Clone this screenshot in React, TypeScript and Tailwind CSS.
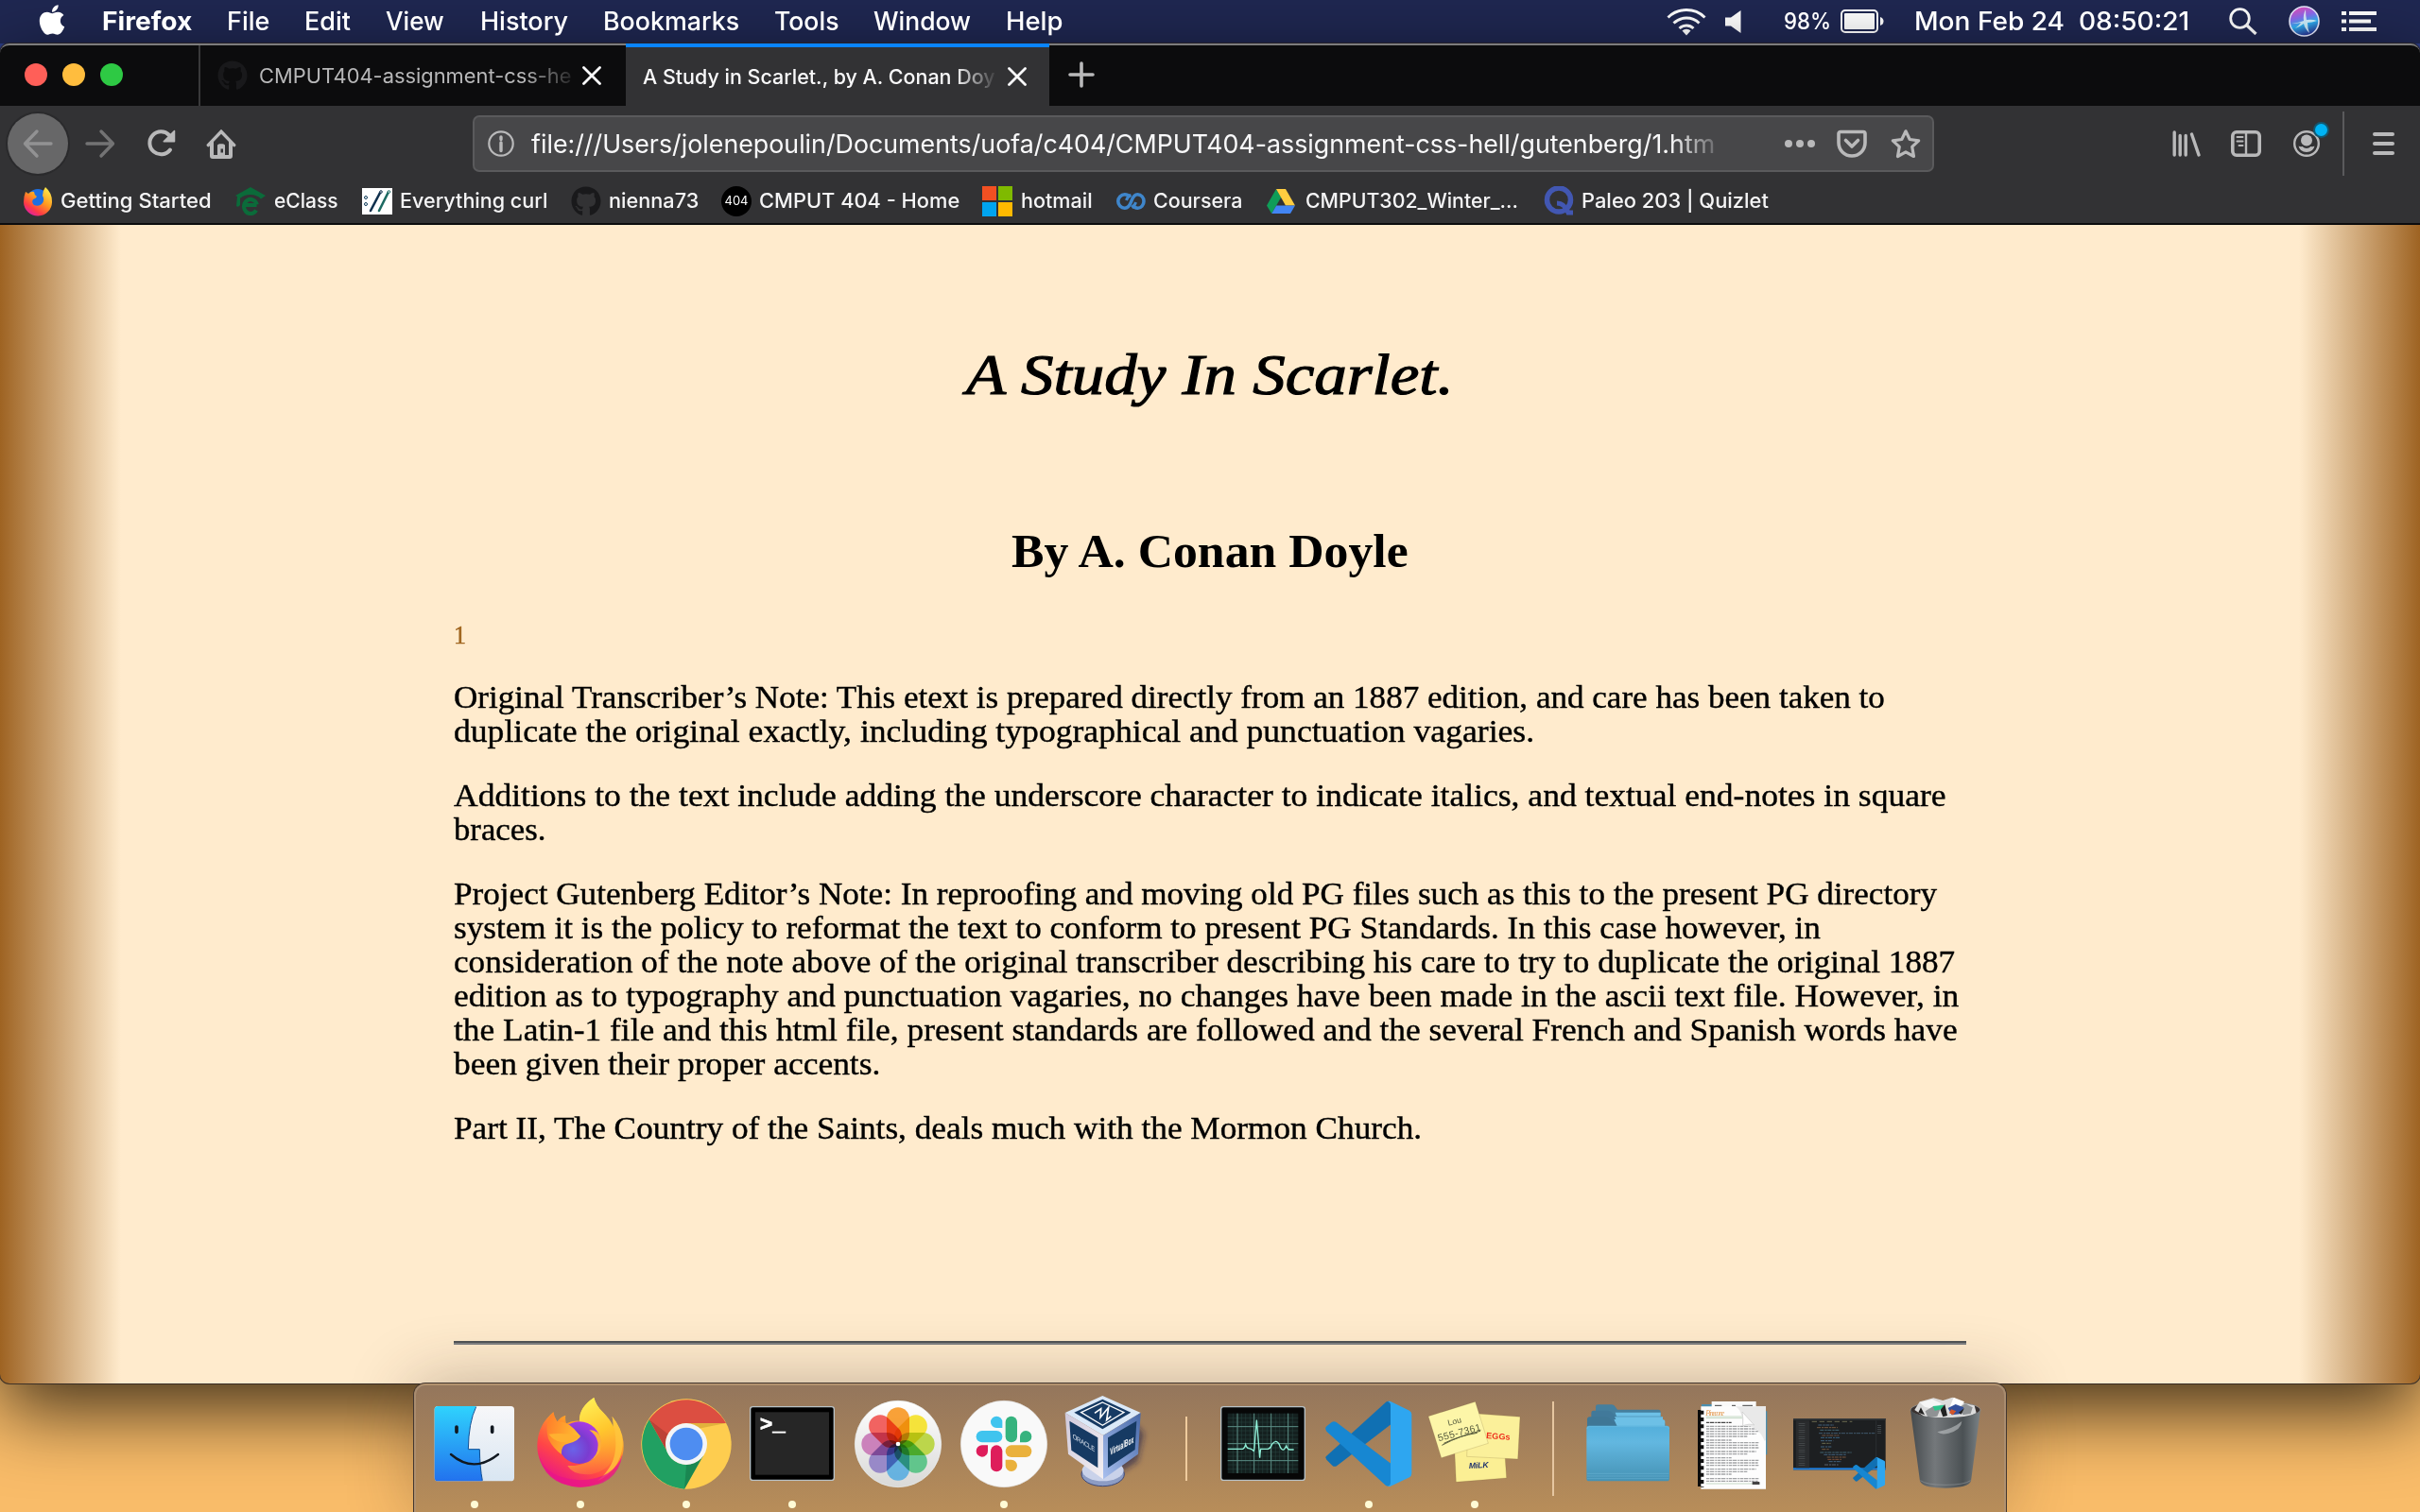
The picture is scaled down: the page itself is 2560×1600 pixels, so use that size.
import { useLayoutEffect, useRef, useState, type ReactNode } from "react";
import { FaApple, FaGithub } from "react-icons/fa";

/** Single line of text stretched horizontally so that it spans exactly `w` pixels. */
function Fit({ w, className = "", children }: { w: number; className?: string; children: ReactNode }) {
  const ref = useRef<HTMLSpanElement>(null);
  const [scale, setScale] = useState(1);
  useLayoutEffect(() => {
    if (ref.current) setScale(w / ref.current.offsetWidth);
  }, [w]);
  return (
    <span className={`block shrink-0 whitespace-pre ${className}`} style={{ width: w }}>
      <span ref={ref} className="inline-block origin-left" style={{ transform: `scaleX(${scale})` }}>
        {children}
      </span>
    </span>
  );
}

function MenuBar() {
  return (
    <header className="flex h-[46px] shrink-0 items-center bg-[#1f2751] pb-px text-[27px] leading-[44px] font-medium text-white">
      <FaApple className="ml-[41px] h-[36px] w-[28px] shrink-0 -translate-y-[2px]" />
      <Fit w={95} className="ml-[39px] font-bold">Firefox</Fit>
      <Fit w={45} className="ml-[37px]">File</Fit>
      <Fit w={49} className="ml-[37px]">Edit</Fit>
      <Fit w={62} className="ml-[37px]">View</Fit>
      <Fit w={93} className="ml-[38px]">History</Fit>
      <Fit w={144} className="ml-[37px]">Bookmarks</Fit>
      <Fit w={68} className="ml-[37px]">Tools</Fit>
      <Fit w={103} className="ml-[37px]">Window</Fit>
      <Fit w={60} className="ml-[37px]">Help</Fit>
      <div className="grow" />
      <svg className="h-[30px] w-[42px]" viewBox="0 0 42 30" fill="none" stroke="#fff" strokeWidth="3">
        <path d="M1.5 10.5a28 28 0 0 1 39 0M7.5 16.5a19.500 19.500 0 0 1 27 0M13.500 22a11 11 0 0 1 15 0" />
        <path d="M21 29.500l-4.500-5a6.500 6.500 0 0 1 9 0z" fill="#fff" stroke="none" />
      </svg>
      <svg className="ml-[20px] h-[24px] w-[17px]" viewBox="0 0 17 24" fill="#fff">
        <path d="M0 7.500h6L16.500 0v24L6 16.500H0z" />
      </svg>
      <Fit w={50} className="ml-[45px] text-[24px]">98%</Fit>
      <svg className="ml-[10px] h-[25px] w-[46px]" viewBox="0 0 46 25">
        <rect x="1" y="1" width="38" height="23" rx="4" fill="none" stroke="#fff" strokeWidth="2" />
        <rect x="4" y="4" width="32" height="17" rx="1" fill="#fff" />
        <path d="M42 8q3.500 1 3.500 4.500T42 17z" fill="#fff" />
      </svg>
      <Fit w={291} className="ml-[32px]">{"Mon Feb 24  08:50:21"}</Fit>
      <svg className="ml-[42px] h-[29px] w-[30px]" viewBox="0 0 30 29" fill="none" stroke="#fff" strokeWidth="2.800">
        <circle cx="11.500" cy="11.500" r="9.800" />
        <path d="M18.500 18.500l10 9.500" strokeWidth="3.200" />
      </svg>
      <svg className="ml-[33px] h-[33px] w-[33px]" viewBox="0 0 33 33">
        <defs>
          <linearGradient id="siri" x1="0.300" y1="0" x2="0.600" y2="1">
            <stop offset="0" stopColor="#e64bb8" />
            <stop offset="0.350" stopColor="#8a6cf0" />
            <stop offset="0.600" stopColor="#2fb4f5" />
            <stop offset="1" stopColor="#2a2a8c" />
          </linearGradient>
        </defs>
        <circle cx="16.500" cy="16.500" r="15.500" fill="url(#siri)" stroke="#e9ecff" strokeWidth="1.600" />
        <path d="M3 19q8-1 13-3-1-6 2-12 0 7 1 11 6-1 11 1-6 2-10 2 0 6 2 11-5-5-6-10-5 4-9 5 4-3 6-6-5 1-10 1z" fill="#e8fbff" fillOpacity="0.850" />
      </svg>
      <svg className="mr-[46px] ml-[23px] h-[21px] w-[37px]" viewBox="0 0 37 21" fill="#fff">
        <path d="M0 0h5v4H0zM8 0h29v4H8zM0 8.500h5v4H0zM8 8.500h23v4H8zM0 17h5v4H0zM8 17h29v4H8z" />
      </svg>
    </header>
  );
}

function Cross({ className }: { className: string }) {
  return (
    <svg className={`h-[20px] w-[20px] shrink-0 ${className}`} viewBox="0 0 20 20" stroke="#f9f9fa" strokeWidth="2.800" strokeLinecap="round">
      <path d="M1.500 1.500l17 17M18.500 1.500l-17 17" />
    </svg>
  );
}

function TabStrip() {
  return (
    <div className="flex h-[66px] items-stretch rounded-t-[10px] border-t-2 border-[#7d7d7d] bg-[#0c0c0d] text-[21px] leading-[66px]">
      <div className="flex w-[212px] items-center gap-[16px] border-r-2 border-[#39393a] pb-[2px] pl-[26px]">
        <i className="h-[24px] w-[24px] rounded-full bg-[#ff5f58]" />
        <i className="h-[24px] w-[24px] rounded-full bg-[#ffbd3e]" />
        <i className="h-[24px] w-[24px] rounded-full bg-[#2ec944]" />
      </div>
      <div className="flex w-[450px] items-center">
        <FaGithub className="ml-[18px] h-[32px] w-[32px] text-[#19191b]" />
        <Fit w={331} className="ml-[12px] [mask-image:linear-gradient(to_right,black_280px,transparent_340px)] pt-[2px] text-[#b8b8b9]">CMPUT404-assignment-css-he</Fit>
        <Cross className="ml-[11px]" />
      </div>
      <div className="-mt-[2px] flex w-[448px] items-center border-t-4 border-[#0a84ff] bg-[#323234]">
        <Fit w={373} className="ml-[18px] [mask-image:linear-gradient(to_right,black_330px,transparent_376px)] pt-px font-medium text-[#f9f9fa]">A Study in Scarlet., by A. Conan Doy</Fit>
        <Cross className="ml-[13px]" />
      </div>
      <svg className="mt-[17px] ml-[20px] h-[28px] w-[28px]" viewBox="0 0 28 28" stroke="#b9b9ba" strokeWidth="3.600" strokeLinecap="round">
        <path d="M14 2v24M2 14h24" />
      </svg>
    </div>
  );
}

function NavBar() {
  return (
    <div className="flex h-[80px] items-center text-[#b9b9ba]">
      <div className="ml-[8px] flex h-[64px] w-[64px] items-center justify-center rounded-full bg-[#676768] ring-2 ring-[#2a2a2c]">
        <svg className="h-[32px] w-[32px]" viewBox="0 0 32 32" fill="none" stroke="#929293" strokeWidth="3.400" strokeLinecap="round" strokeLinejoin="round">
          <path d="M30 16H3M15 3L2.500 16 15 29" />
        </svg>
      </div>
      <svg className="ml-[18px] h-[32px] w-[32px]" viewBox="0 0 32 32" fill="none" stroke="#737374" strokeWidth="3.400" strokeLinecap="round" strokeLinejoin="round">
        <path d="M2 16h27M17 3l12.500 13L17 29" />
      </svg>
      <svg className="ml-[33px] h-[32px] w-[32px]" viewBox="0 0 32 32" fill="none" stroke="currentColor" strokeWidth="4" strokeLinecap="round">
        <path d="M25 22.500A12 12 0 1 1 24 7" />
        <path d="M29.500 2.500v11.300h-11.300z" fill="currentColor" strokeWidth="1.500" strokeLinejoin="round" />
      </svg>
      <svg className="ml-[31px] h-[32px] w-[32px]" viewBox="0 0 32 32">
        <path d="M16 .8L31 16.500a1.700 1.700 0 0 1-2.500 2.300L28 18.300V29a3 3 0 0 1-3 3H7a3 3 0 0 1-3-3V18.300l-.5.500A1.700 1.700 0 0 1 1 16.500z" fill="currentColor" />
        <path d="M16 5.700L8 14v14h4V18.500a2 2 0 0 1 2-2h4a2 2 0 0 1 2 2V28h4V14z" fill="#323234" />
        <path d="M12 19a2.500 2.500 0 0 1 2.500-2.500h3A2.500 2.500 0 0 1 20 19v10h-8z" fill="currentColor" />
        <rect x="15.500" y="21.500" width="2.500" height="4" fill="#323234" />
      </svg>

      <div className="ml-[250px] flex h-[60px] w-[1546px] items-center rounded-[7px] border-2 border-[#5a5a5c] bg-[#474749]">
        <svg className="ml-[14px] h-[28px] w-[28px]" viewBox="0 0 28 28" fill="none" stroke="currentColor" strokeWidth="2.200">
          <circle cx="14" cy="14" r="12.700" />
          <path d="M14 7v2.500M14 13v8.500" strokeWidth="3.400" strokeLinecap="round" />
        </svg>
        <Fit w={1252} className="ml-[18px] [mask-image:linear-gradient(to_right,black_1205px,transparent_1265px)] pt-[2px] text-[27px] leading-[40px] text-[#f9f9fa]">
          file:///Users/jolenepoulin/Documents/uofa/c404/CMPUT404-assignment-css-hell/gutenberg/1.htm
        </Fit>
        <svg className="ml-[73px] h-[10px] w-[34px]" viewBox="0 0 34 10" fill="currentColor">
          <circle cx="5" cy="5" r="4" />
          <circle cx="17" cy="5" r="4" />
          <circle cx="29" cy="5" r="4" />
        </svg>
        <svg className="ml-[22px] h-[30px] w-[32px]" viewBox="0 0 32 30" fill="none" stroke="currentColor" strokeWidth="3.600" strokeLinecap="round" strokeLinejoin="round">
          <path d="M4 2.500h24a2 2 0 0 1 2 2V14a14 14 0 0 1-28 0V4.500a2 2 0 0 1 2-2z" />
          <path d="M9.500 11.500l6.500 6.500 6.500-6.500" />
        </svg>
        <svg className="ml-[25px] h-[32px] w-[32px]" viewBox="0 0 32 32" fill="none" stroke="currentColor" strokeWidth="3.200" strokeLinejoin="round">
          <path d="M16 2.800l4.200 8.700 9.500 1.300-7 6.500 1.800 10.200-8.500-4.700-8.500 4.700 1.800-10.200-7-6.500 9.500-1.300z" />
        </svg>
      </div>

      <svg className="ml-[252px] h-[28px] w-[31px]" viewBox="0 0 31 28" fill="none" stroke="currentColor" strokeWidth="3.400" strokeLinecap="round">
        <path d="M2.200 2v24M8.200 5.500V26M14.200 5.500V26M20.500 4l7.500 22" />
      </svg>
      <svg className="ml-[31px] h-[28px] w-[32px]" viewBox="0 0 32 28" fill="none" stroke="currentColor">
        <rect x="1.800" y="1.800" width="28.400" height="24.400" rx="4" strokeWidth="3.600" />
        <path d="M16 2v24" strokeWidth="2.400" />
        <path d="M6.500 7h6M6.500 11.500h6M8.500 16h4" strokeWidth="2" strokeLinecap="round" />
      </svg>
      <div className="relative ml-[34px] h-[28px] w-[28px]">
        <svg className="h-[28px] w-[28px]" viewBox="0 0 28 28">
          <circle cx="14" cy="14" r="12.800" fill="none" stroke="currentColor" strokeWidth="2.400" />
          <ellipse cx="14" cy="10.500" rx="6" ry="6" fill="currentColor" />
          <path d="M5.500 16.500q2 1 4 .5 2 2 4.500 2t4.500-2q2 .5 4-.5-1.500 6.500-8.500 6.500t-8.500-6.500z" fill="currentColor" />
        </svg>
        <i className="absolute -top-[7px] left-[23px] h-[13px] w-[13px] rounded-full bg-[#00b3f4] ring-2 ring-[#125871]" />
      </div>
      <i className="ml-[24px] h-[68px] w-[2px] bg-[#5a5a5c]" />
      <svg className="ml-[29px] h-[26px] w-[26px]" viewBox="0 0 26 26" stroke="currentColor" strokeWidth="4" strokeLinecap="round">
        <path d="M3 3h19M3 13h19M3 23h19" />
      </svg>
    </div>
  );
}

function BookmarksBar() {
  return (
    <div className="flex h-[44px] items-center pb-[3px] text-[21px] leading-[40px] font-medium text-[#f5f5f6]">
      <svg className="ml-[25px] h-[32px] w-[30px]" viewBox="0 0 30 32">
        <defs>
          <linearGradient id="ffs" x1="0.850" y1="0.050" x2="0.250" y2="0.950">
            <stop offset="0" stopColor="#ffe94a" />
            <stop offset="0.450" stopColor="#ff9a1f" />
            <stop offset="0.800" stopColor="#ff3a45" />
            <stop offset="1" stopColor="#e0229a" />
          </linearGradient>
        </defs>
        <circle cx="15" cy="15" r="12" fill="#1e6fe0" />
        <path d="M2 6q2 1 3 2 3-3 6-2 0 3 3 5-1 2-4 3-2 3 1 6 5 2 8-1 4-4 1-9 0-5 3-9 7 6 7 15a15 15 0 0 1-30 1Q0 11 2 6z" fill="url(#ffs)" />
      </svg>
      <Fit w={160} className="ml-[9px]">Getting Started</Fit>
      <svg className="ml-[25px] h-[30px] w-[32px]" viewBox="0 0 32 30">
        <path d="M16 0l16 9-5 3.500q-4-4.500-11-4.500T5 12v7q-2 3-4 1l1-10-2-1z" fill="#0b6b3a" />
        <path d="M22.500 19H10M22 24.500a7 7.500 0 1 1 .8-6" fill="none" stroke="#0b6b3a" strokeWidth="4.200" />
      </svg>
      <Fit w={68} className="ml-[9px]">eClass</Fit>
      <svg className="ml-[25px] h-[28px] w-[32px]" viewBox="0 0 32 28" fill="none">
        <rect width="32" height="28" fill="#fff" />
        <circle cx="4" cy="10" r="1.500" stroke="#0f3b5a" />
        <circle cx="4" cy="17" r="1.500" stroke="#0f3b5a" />
        <path d="M9 24L19 5" stroke="#0f2f4c" strokeWidth="2.600" strokeLinecap="round" />
        <path d="M18 24L28 4" stroke="#1d6a62" strokeWidth="2.600" strokeLinecap="round" />
        <circle cx="20" cy="4" r="1.300" fill="#fff" stroke="#0f2f4c" />
        <circle cx="28.500" cy="4" r="1.300" fill="#fff" stroke="#1d6a62" />
      </svg>
      <Fit w={156} className="ml-[8px]">Everything curl</Fit>
      <FaGithub className="ml-[25px] h-[32px] w-[32px] text-[#19191b]" />
      <Fit w={95} className="ml-[8px]">nienna73</Fit>
      <span className="ml-[24px] flex h-[32px] w-[32px] items-center justify-center rounded-full bg-black text-[13px] leading-none font-normal text-white">404</span>
      <Fit w={212} className="ml-[8px]">CMPUT 404 - Home</Fit>
      <span className="ml-[24px] grid h-[32px] w-[32px] grid-cols-2 gap-[2px]">
        <i className="bg-[#f25022]" />
        <i className="bg-[#7fba00]" />
        <i className="bg-[#00a4ef]" />
        <i className="bg-[#ffb900]" />
      </span>
      <Fit w={76} className="ml-[9px]">hotmail</Fit>
      <svg className="ml-[25px] h-[18px] w-[31px]" viewBox="0 0 31 18" fill="none" stroke="#3f86cb" strokeWidth="3.600">
        <path d="M14.500 4.500Q12 1.800 8.800 1.800a7 7.200 0 0 0 0 14.400c4.200 0 5.700-3.500 7-7.200s3-7.200 6.700-7.200a6.500 7.200 0 0 1 0 14.400q-3.500 0-6-3" />
        <path d="M10.500 8q1.500-4.500 5-5.500M20.500 10q-1.500 4.500-4 5.500" strokeWidth="3" />
      </svg>
      <Fit w={94} className="ml-[8px]">Coursera</Fit>
      <svg className="ml-[26px] h-[26px] w-[30px]" viewBox="0 0 30 26">
        <path d="M10 0l5.200 8.800L5.200 26 0 17.500z" fill="#0f9d58" />
        <path d="M10 0h10l10 17.500H20z" fill="#ffcd40" />
        <path d="M10.200 17.500H30L25 26H5.200z" fill="#4285f4" />
      </svg>
      <Fit w={225} className="ml-[11px]">CMPUT302_Winter_...</Fit>
      <svg className="ml-[27px] h-[31px] w-[32px]" viewBox="0 0 32 31" fill="none" stroke="#4257b2" strokeWidth="5.500">
        <circle cx="16" cy="14.500" r="12.500" />
        <path d="M14 18q8 0 12 10h5" strokeWidth="5" />
      </svg>
      <Fit w={198} className="ml-[8px]">Paleo 203 | Quizlet</Fit>
    </div>
  );
}

function Page() {
  return (
    <main className="h-[1228px] rounded-b-[10px] border-t-2 border-[#0c0c0d] bg-[linear-gradient(to_right,#9e6322,#ffebcd_5%,#ffebcd_95%,#9e6322)] font-['Liberation_Serif',serif] text-black">
      <div className="mx-auto flex w-[1600px] flex-col">
        <Fit w={516} className="mt-[123px] self-center text-[62px] leading-[70px] italic [-webkit-text-stroke:1.2px_black]">A Study In Scarlet.</Fit>
        <Fit w={420} className="mt-[122px] self-center text-[50px] leading-[60px] font-bold">By A. Conan Doyle</Fit>
        <Fit w={13} className="mt-[41px] text-[28px] leading-[36px] text-[#a0651f] [-webkit-text-stroke:0.4px_#a0651f]">1</Fit>
        <div className="mt-[30px] flex flex-col gap-[32px] text-[34px] leading-[36px] [-webkit-text-stroke:0.4px_black]">
          <p>
            <Fit w={1514}>Original Transcriber’s Note: This etext is prepared directly from an 1887 edition, and care has been taken to</Fit>
            <Fit w={1143}>duplicate the original exactly, including typographical and punctuation vagaries.</Fit>
          </p>
          <p>
            <Fit w={1579}>Additions to the text include adding the underscore character to indicate italics, and textual end-notes in square</Fit>
            <Fit w={97}>braces.</Fit>
          </p>
          <p>
            <Fit w={1569}>Project Gutenberg Editor’s Note: In reproofing and moving old PG files such as this to the present PG directory</Fit>
            <Fit w={1446}>system it is the policy to reformat the text to conform to present PG Standards. In this case however, in</Fit>
            <Fit w={1588}>consideration of the note above of the original transcriber describing his care to try to duplicate the original 1887</Fit>
            <Fit w={1592}>edition as to typography and punctuation vagaries, no changes have been made in the ascii text file. However, in</Fit>
            <Fit w={1591}>the Latin-1 file and this html file, present standards are followed and the several French and Spanish words have</Fit>
            <Fit w={451}>been given their proper accents.</Fit>
          </p>
          <p>
            <Fit w={1024}>Part II, The Country of the Saints, deals much with the Mormon Church.</Fit>
          </p>
        </div>
        <hr className="mt-[207px] h-[4px] border-0 border-t-2 border-b-2 border-t-[#525457] border-b-[#7f8083]" />
      </div>
    </main>
  );
}

function CodeMark() {
  return (
    <g>
      <path d="M488 304L680 130q10-4 14 2v70L522 334q-8 4-14-2l-18-18q-4-6-2-10z" fill="#1070b3" />
      <path d="M488 220q-4-8 3-13l15-12q8-5 16 1l172 130v66q-6 10-16 4L490 224z" fill="#1787d2" />
      <path d="M684 129q5-2 9 0l60 29q7 4 7 12v188q0 8-7 12l-60 28q-4 2-9 0 9-2 9-12V141q0-9-9-12z" fill="#2ea6f0" />
    </g>
  );
}

/** Dock tile: artwork above, running indicator below. */
function Tile({ view, running = false, children }: { view: string; running?: boolean; children: ReactNode }) {
  return (
    <div className="flex w-[112px] shrink-0 flex-col items-center">
      <svg className="h-[120px] w-[112px]" viewBox={view}>{children}</svg>
      {running && <i className="mt-[2px] h-[8px] w-[8px] rounded-full bg-[#fffbd6]" />}
    </div>
  );
}

const petals = ["#f7941d", "#f5e020", "#b5d334", "#4fc07f", "#55ace0", "#8d7cc4", "#c673b4", "#f04e4c"];
const docRows = [196, 208, 216, 224, 232, 240, 252, 260, 268, 276, 288, 296, 308, 316, 324, 332, 344, 352, 360, 374, 382];
const codeRows = [
  [850, 204, 50, "#5b8fb9"], [846, 212, 66, "#b07c50"], [856, 220, 60, "#5a93a8"], [852, 230, 178, "#587f9c"],
  [862, 237, 54, "#a87858"], [858, 244, 62, "#4c90c0"], [858, 254, 40, "#5b8fb9"], [862, 262, 28, "#a0a070"],
  [858, 273, 34, "#5b8fb9"], [862, 281, 22, "#b07c50"], [856, 291, 100, "#5a93a8"], [868, 298, 70, "#5b8fb9"],
  [878, 306, 60, "#b07c50"], [880, 313, 44, "#c07048"], [884, 320, 40, "#5b8fb9"], [870, 330, 44, "#7f8f9c"],
] as const;

function Dock() {
  return (
    <nav className="relative ml-[438px] flex h-[140px] w-[1684px] shrink-0 rounded-t-[12px] border-t-2 border-r-2 border-l-2 border-[#b09478]/70 bg-[linear-gradient(#94765c,#b98e59)] pl-[6px] shadow-[0_0_0_1px_#44372f,0_0_70px_rgba(60,40,30,0.320)]">
      <Tile view="48 78 336 360" running>
        <defs>
          <linearGradient id="fin" x1="0" y1="0" x2="0" y2="1"><stop stopColor="#2fd3fd" /><stop offset="1" stopColor="#2272ee" /></linearGradient>
          <linearGradient id="fin2" x1="0" y1="0" x2="0" y2="1"><stop stopColor="#f7f7f9" /><stop offset="1" stopColor="#d9e6f2" /></linearGradient>
        </defs>
        <rect x="89" y="144" width="253" height="238" rx="11" fill="url(#fin2)" />
        <path d="M100 144h121q-24 50-25 137h36q1 60 9 101H100q-11 0-11-11V155q0-11 11-11z" fill="url(#fin)" />
        <path d="M221 146q-24 50-25 135h36q1 60 9 99" fill="none" stroke="#0e4f94" strokeWidth="3" />
        <path d="M159 210v16M272 210v16" stroke="#111820" strokeWidth="11" strokeLinecap="round" />
        <path d="M141 297q72 62 150 0" fill="none" stroke="#111820" strokeWidth="7" strokeLinecap="round" />
      </Tile>
      <Tile view="384 78 336 360" running>
        <defs>
          <linearGradient id="fox" x1="0.800" y1="0.100" x2="0.300" y2="1"><stop stopColor="#ffe44a" /><stop offset="0.350" stopColor="#ff9a28" /><stop offset="0.700" stopColor="#ff4547" /><stop offset="1" stopColor="#e8128c" /></linearGradient>
          <linearGradient id="foxy" x1="0.300" y1="0" x2="0.600" y2="1"><stop stopColor="#fff35a" /><stop offset="0.500" stopColor="#ffc72d" /><stop offset="1" stopColor="#ff8d38" stopOpacity="0.300" /></linearGradient>
          <linearGradient id="foxo" x1="0" y1="0" x2="1" y2="0.300"><stop stopColor="#ff7a2a" /><stop offset="1" stopColor="#ffbd30" /></linearGradient>
          <radialGradient id="globe" cx="0.350" cy="0.650" r="0.750"><stop stopColor="#6a63e8" /><stop offset="0.500" stopColor="#7a3cd0" /><stop offset="1" stopColor="#b23ae6" /></radialGradient>
        </defs>
        <path d="M466 163q2 16 12 30 12-16 27-20-2 14 2 26 20-10 42-8-2-42 46-74 6 26 30 48 20 22 30 46 2-18-2-34 36 44 36 94a137 130 0 0 1-274 0q0-66 51-108z" fill="url(#fox)" />
        <path d="M549 195q-4-46 46-78 6 26 30 48 42 40 42 96 0 80-76 98-60 8-80-26 60 4 94-40 20-40-6-76-20-22-50-22z" fill="url(#foxy)" />
        <path d="M652 176q36 44 34 94-10 80-80 112 60-50 58-120 0-40-12-86z" fill="#ffc63c" fillOpacity="0.800" />
        <circle cx="549" cy="260" r="67" fill="url(#globe)" />
        <path d="M580 220q30 0 36 26 10 50-36 72 28-16 28-50 0-28-28-48z" fill="#ffb03a" />
        <path d="M466 163q2 16 12 30 36-4 70 42 6 3 2 8-14 16-38 20-22 4-20 34-28-20-42-50-14-54 16-84z" fill="url(#foxo)" />
        <path d="M452 233q36-6 98 4-16 20-46 22-34 0-52-26z" fill="#ffb030" />
        <path d="M418 285q10 86 132 94 110-2 136-84-16 106-136 106-118-6-132-116z" fill="#e8148a" fillOpacity="0.750" />
      </Tile>
      <Tile view="720 78 336 360" running>
        <circle cx="888" cy="264" r="143" fill="#fecd4f" />
        <path d="M770 187A143 143 0 0 1 1014 198H888a66 66 0 0 0-62 88z" fill="#dc4e41" />
        <path d="M770 187A143 143 0 0 0 882 407l60-106a66 66 0 0 1-116-15z" fill="#21a062" />
        <path d="M770 187l56 99a66 66 0 0 1 6-52z" fill="#8f3028" fillOpacity="0.400" />
        <path d="M888 198h126l-90 18z" fill="#b98a20" fillOpacity="0.400" />
        <path d="M882 407l60-106-54 30z" fill="#0d5a34" fillOpacity="0.350" />
        <circle cx="888" cy="264" r="66" fill="#f4f5f7" />
        <circle cx="888" cy="264" r="52" fill="#4e8df1" />
      </Tile>
      <Tile view="1056 78 336 360" running>
        <rect x="1091" y="146" width="266" height="233" rx="8" fill="#000" stroke="#b9c2c6" strokeWidth="4" />
        <rect x="1107" y="163" width="234" height="199" fill="#262626" />
        <text x="1121" y="222" fontFamily="Liberation Mono" fontWeight="bold" fontSize="68" stroke="#fff" strokeWidth="2" fill="#fff">{">_"}</text>
      </Tile>
      <Tile view="12 78 336 360">
        <defs>
          <linearGradient id="disc" x1="0" y1="0" x2="0" y2="1"><stop stopColor="#fff" /><stop offset="1" stopColor="#d9d9d7" /></linearGradient>
        </defs>
        <circle cx="180" cy="264" r="137" fill="url(#disc)" stroke="#e9eef0" strokeWidth="2" />
        <g className="isolate">
          {petals.map((fill, i) => (
            <rect key={fill} x="144" y="148" width="72" height="118" rx="36" fill={fill} fillOpacity="0.880" className="mix-blend-multiply" transform={`rotate(${i * 45} 180 264)`} />
          ))}
        </g>
        <circle cx="180" cy="264" r="7" fill="#fff" />
      </Tile>
      <Tile view="348 78 336 360" running>
        <circle cx="516" cy="264" r="137" fill="#f9f9f9" stroke="#e3e3e3" strokeWidth="2" />
        <g fill="#40c4ee"><rect x="428" y="222" width="83" height="37" rx="18.500" /><path d="M511 213h-18a18.500 18.500 0 1 1 18-18z" /></g>
        <g fill="#36b37e"><rect x="521" y="176" width="37" height="83" rx="18.500" /><path d="M567 259v-18a18.500 18.500 0 1 1 18 18z" /></g>
        <g fill="#de1d5b"><rect x="474" y="268" width="37" height="84" rx="18.500" /><path d="M465 268v18a18.500 18.500 0 1 1-18-18z" /></g>
        <g fill="#eab13c"><rect x="521" y="268" width="83" height="38" rx="18.500" /><path d="M521 314h18a18.500 18.500 0 1 1-18 18z" /></g>
      </Tile>
      <Tile view="684 78 336 360">
        <defs>
          <linearGradient id="vbl" x1="0" y1="0" x2="1" y2="1"><stop stopColor="#cfc9dc" /><stop offset="1" stopColor="#f4f0f2" /></linearGradient>
          <linearGradient id="vbr" x1="1" y1="0" x2="0" y2="1"><stop stopColor="#4668a8" /><stop offset="1" stopColor="#a9c0ee" /></linearGradient>
          <filter id="soft" x="-50%" y="-50%" width="200%" height="200%"><feGaussianBlur stdDeviation="9" /></filter>
        </defs>
        <path d="M830 390l110-70 20-90-40-40-80 190z" fill="#1a1c4a" fillOpacity="0.600" filter="url(#soft)" />
        <ellipse cx="830" cy="360" rx="68" ry="38" fill="#8c9cc4" stroke="#3c4878" strokeWidth="3" />
        <ellipse cx="830" cy="348" rx="66" ry="34" fill="#c9d2ea" />
        <path d="M829 111l121 54-119 72-121-72z" fill="#dbe9f8" />
        <path d="M710 165l121 72v139l-111-80z" fill="url(#vbl)" />
        <path d="M950 165l-119 72v139l111-80z" fill="url(#vbr)" />
        <path d="M829 122l90 42-90 53-90-53z" fill="#163a63" />
        <path d="M829 132l68 32-68 41-68-41z" fill="none" stroke="#fff" strokeWidth="4" />
        <path d="M804 166l20-14-2 28 26-32-6 40 14-12" fill="none" stroke="#fff" strokeWidth="5" />
        <path d="M724 191l90 53v96l-84-56zM937 191l-91 53v96l86-58z" fill="#163a63" />
        <text transform="matrix(.82 .5 0 1 734 246)" fontFamily="Liberation Sans" fontSize="22" textLength="86" fill="#dfe6f0">ORACLE</text>
        <text transform="matrix(.83 -.45 0 1 853 300)" fontFamily="Liberation Sans" fontWeight="bold" fontSize="32" textLength="90" lengthAdjust="spacingAndGlyphs" fill="#fff">VirtualBox</text>
      </Tile>
      <div className="flex w-[50px] justify-center"><i className="mt-[33px] h-[68px] w-[2px] bg-[#efcb9d]" /></div>
      <Tile view="120 78 336 360">
        <rect x="155" y="146" width="266" height="233" rx="8" fill="#070707" stroke="#b9c2c6" strokeWidth="4" />
        <rect x="176" y="167" width="224" height="190" fill="#14201f" />
        <path d="M176 182h224M176 195h224M176 222h224M176 236h224M176 249h224M176 276h224M176 290h224M176 303h224M176 330h224M176 344h224M193 167v190M220 167v190M233 167v190M247 167v190M274 167v190M287 167v190M301 167v190M328 167v190M341 167v190M355 167v190M382 167v190" stroke="#2a4643" strokeWidth="1.500" />
        <path d="M176 209h224M176 263h224M176 317h224M207 167v190M260 167v190M314 167v190M368 167v190" stroke="#5c8f87" strokeWidth="3" />
        <path d="M176 280h48q6-2 9-14 4 12 10 12 8 2 14 6 3 8 4-10l7-86 5 60 5 60q2-30 4-28h22q8-2 12-14 14-20 24 0 6 18 14 16 4-2 8-12 4 12 12 12h12" fill="none" stroke="#8ff0d8" strokeWidth="4" />
      </Tile>
      <Tile view="456 78 336 360" running><CodeMark /></Tile>
      <Tile view="792 78 336 360" running>
        <g stroke="#5b4420" strokeOpacity="0.250" strokeWidth="2">
          <path d="M896 280l158-10 7 102-160 13z" fill="#fbef94" />
          <path d="M940 166l164 12-7 134-162-8z" fill="#fbf09a" />
          <path d="M813 176l149-46 41 132-149 46z" fill="#fdf6a8" />
        </g>
        <g fontFamily="Liberation Sans">
          <text transform="rotate(-14 876 204)" x="876" y="206" fontSize="26" textLength="44" fill="#555a3c">Lou</text>
          <text transform="rotate(-15 846 256)" x="846" y="256" fontSize="31" textLength="140" fill="#555a3c">555-7361</text>
          <text transform="rotate(4 994 246)" x="996" y="246" fontSize="27" fontWeight="bold" textLength="76" lengthAdjust="spacingAndGlyphs" fill="#ee2d1c">EGGs</text>
          <text transform="rotate(-3 942 340)" x="942" y="342" fontSize="26" fontWeight="bold" fontStyle="italic" textLength="62" fill="#22356e">MiLK</text>
        </g>
        <path d="M856 268q60-32 122-45M862 262q50-24 106-33" stroke="#555a3c" strokeWidth="3" fill="none" />
      </Tile>
      <div className="flex w-[50px] justify-center"><i className="mt-[17px] ml-[4px] h-[100px] w-[2px] bg-[#e6c6a0]" /></div>
      <Tile view="78 78 336 360">
        <defs>
          <linearGradient id="fold" x1="0" y1="0" x2="0" y2="1"><stop stopColor="#53afdb" /><stop offset="0.300" stopColor="#62b7e0" /><stop offset="1" stopColor="#4592b4" /></linearGradient>
        </defs>
        <path d="M144 146q0-7 7-7h44q8 0 12 8l6 8h130q7 0 7 7v40H144z" fill="#457f9e" />
        <path d="M206 164h144v30H216z" fill="#6dc0e6" />
        <path d="M130 165q0-7 7-7h46q9 0 14 8l8 10h144q8 0 8 8v40H130z" fill="#41799a" />
        <path d="M204 178h153v30H220z" fill="#6dc0e6" />
        <path d="M117 186q0-8 8-8h50q10 0 15 8l8 10h160q7 0 7 7v20H117z" fill="#3f7796" />
        <path d="M202 186h154q8 0 8 8v14H212z" fill="#6dc0e6" />
        <path d="M115 214q0-8 8-8h247q8 0 8 8v160q0 8-8 8H123q-8 0-8-8z" fill="url(#fold)" />
        <path d="M117 216q0-7 7-7h245q7 0 7 7M117 358h259M117 366h259M117 374h259" fill="none" stroke="#86cdeb" strokeOpacity="0.600" strokeWidth="1.500" />
      </Tile>
      <Tile view="414 78 336 360">
        <path d="M480 138h34v12h-34zM684 160h4v138h-4z" fill="#4b8fb0" />
        <path d="M512 129h141v20H512z" fill="#fafafa" />
        <path d="M522 142h22M576 142h12M610 142h32" stroke="#444" strokeWidth="3" />
        <path d="M468 156h22v243h-22z" fill="#0b0b0b" />
        <path d="M478 145h206v262H478z" fill="#fdfdfd" />
        <path d="M482 158v244" stroke="#111" strokeWidth="10" strokeDasharray="12 10" />
        <text x="493" y="173" fontFamily="Liberation Serif" fontStyle="italic" fontSize="24" textLength="60" fill="#e39a52">Pinecone</text>
        <path d="M494 177h120M494 182h174M494 390h172" stroke="#8fb58f" strokeWidth="1.500" />
        {docRows.map((y, i) => (
          <path key={y} d={`M495 ${y}h${[80, 166, 164, 166, 158, 130][i % 6]}`} stroke={i ? "#a2a4a6" : "#444"} strokeWidth="4" strokeDasharray="9 2 14 3 6 2" />
        ))}
        <path d="M586 145q24 10 24 60 50 0 70 50l4-4V145z" fill="#e9e9e9" />
        <path d="M609 162q4 22 2 44 22-8 36-2z" fill="#fff" stroke="#bbb" strokeWidth="1.500" />
        <rect x="641" y="384" width="23" height="9" fill="#444" />
      </Tile>
      <Tile view="750 78 336 360">
        <rect x="771" y="183" width="293" height="163" fill="#1d1f21" />
        <rect x="771" y="183" width="293" height="5" fill="#34373a" />
        <rect x="771" y="340" width="293" height="6" fill="#1e7fe0" />
        <rect x="780" y="190" width="42" height="150" fill="#292b2d" />
        <path d="M786 198v136" stroke="#8a9498" strokeWidth="20" strokeDasharray="2 5" strokeOpacity="0.350" transform="translate(12 0)" />
        <path d="M830 193h128" stroke="#9c9a70" strokeWidth="3" strokeDasharray="16 8" strokeOpacity="0.600" />
        <path d="M1034 190v150" stroke="#34373a" strokeWidth="2" />
        <path d="M1044 204v28" stroke="#798288" strokeWidth="12" strokeDasharray="2 4" strokeOpacity="0.500" />
        {codeRows.map(([x, y, w, c]) => (
          <path key={y} d={`M${x} ${y}h${w}`} stroke={c} strokeOpacity="0.700" strokeWidth="2.600" strokeDasharray="12 3 7 2" />
        ))}
        <g transform="translate(778.700 258) scale(.373)"><CodeMark /></g>
      </Tile>
      <Tile view="1086 78 336 360">
        <defs>
          <linearGradient id="bin" x1="0" y1="0" x2="1" y2="0"><stop stopColor="#44494c" /><stop offset="0.350" stopColor="#74787b" /><stop offset="0.750" stopColor="#4b5154" /><stop offset="1" stopColor="#7b8387" /></linearGradient>
        </defs>
        <ellipse cx="1254" cy="156" rx="111" ry="26" fill="#3a3230" stroke="#9a9fa2" strokeWidth="2" />
        <path d="M1156 156l16-26 44-12 30 8 30-10 36 18 34 8 6 24-30 14h-130z" fill="#dcdcdc" />
        <path d="M1172 132l40-10 30 14-24 18-30-8z" fill="#f6f6f6" />
        <path d="M1190 160l26-16 22 8-10 24-30 4zM1296 150l20-14 24 12-6 20-24 4z" fill="#8f9294" />
        <path d="M1268 146l12-30 34 14-12 14z" fill="#fff" />
        <path d="M1214 144l36-4-8 14-22 4z" fill="#2ec48c" />
        <path d="M1262 150l24-12 26 10-8 20-30 4z" fill="#34509a" />
        <path d="M1272 154l16 6-10 12-12-6z" fill="#d4562a" />
        <path d="M1176 148l12 24-20-8zM1238 156l14-18 8 36-14 4zM1314 150l-10 20-8-6z" fill="#222" />
        <path d="M1143 156q20 24 111 24t111-24l-30 226q-8 22-81 22t-81-22z" fill="url(#bin)" />
        <path d="M1228 226q50-10 78-34-2 28-42 38-24 6-36-4z" fill="#c8cccd" fillOpacity="0.550" />
        <path d="M1174 380q20 14 80 14t80-14" fill="none" stroke="#9aa0a3" strokeOpacity="0.500" strokeWidth="3" />
      </Tile>
    </nav>
  );
}

export default function App() {
  return (
    <div className="flex h-[1600px] w-[2560px] flex-col overflow-hidden bg-[#f9bc69] font-['Inter',sans-serif]">
      <MenuBar />
      <div className="shrink-0 bg-[linear-gradient(#2b3c86_50%,#f9bc69_50%)]">
        <section className="h-[1418px] rounded-[10px] bg-[#323234] shadow-[0_0_0_1px_rgba(40,34,34,0.800),0_28px_80px_rgba(0,0,0,0.740)]">
          <TabStrip />
          <NavBar />
          <BookmarksBar />
          <Page />
        </section>
      </div>
      <Dock />
    </div>
  );
}
